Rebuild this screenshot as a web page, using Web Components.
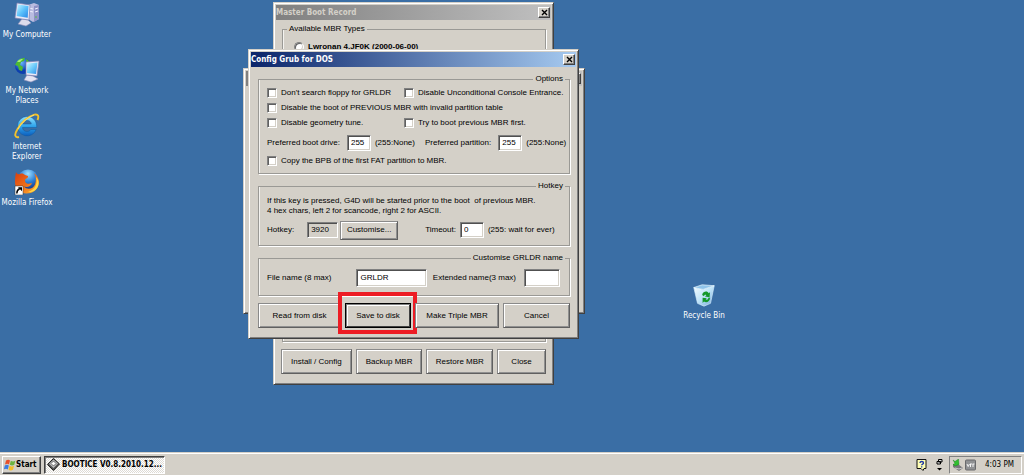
<!DOCTYPE html>
<html lang="en">
<head>
<meta charset="utf-8">
<meta name="viewport" content="width=device-width, initial-scale=1">
<title>Desktop</title>
<style>
html, body { margin: 0; height: 100%; }
body { font: 8px/10px "Liberation Sans", Arial, sans-serif; color: #000; background: #3a6ea5; overflow: hidden; }
</style>
</head>
<body>
<desktop-shell></desktop-shell>
<script>
const FACE = '#d4d0c8';
function define(name, css, html, setup) {
  const t = document.createElement('template');
  t.innerHTML = `<style>*{box-sizing:border-box}${css}</style>${html}`;
  customElements.define(name, class extends HTMLElement {
    constructor() {
      super();
      this.attachShadow({ mode: 'open' }).append(t.content.cloneNode(true));
    }
    connectedCallback() { if (setup) setup(this, this.shadowRoot); }
  });
}

const ICONS = {
  computer: `<svg viewBox="0 0 26 26"><defs><linearGradient id="s" x1="0" y1="0" x2="1" y2="1"><stop stop-color="#c4f4ff"/><stop offset=".5" stop-color="#5cc2fb"/><stop offset="1" stop-color="#2a86e6"/></linearGradient></defs>
    <path d="M14 4l6-2 5 2v14l-6 3-5-3z" fill="#b9bce0"/><path d="M20 5l5-1v14l-5 3z" fill="#8d92c6"/><path d="M15 7l4 1M15 10l4 1M21 8l3-1M21 11l3-1" stroke="#eef0ff"/><path d="M21 16h2" stroke="#58c040"/>
    <path d="M8 18l6 1 3 3-5 3-8-2z" fill="#dcdcec" stroke="#8f8fb8" stroke-width=".6"/>
    <path d="M3 2l13 2-1 15L1 17z" fill="#e8e8f6" stroke="#7c80b0" stroke-width=".7"/><path d="M4 3.500l10.500 1.600-.8 11.600L2.600 15z" fill="url(#s)"/></svg>`,
  network: `<svg viewBox="0 0 26 26"><defs><linearGradient id="s" x1="0" y1="0" x2="1" y2="1"><stop stop-color="#d0f6ff"/><stop offset=".5" stop-color="#6ccbfb"/><stop offset="1" stop-color="#2f8fe8"/></linearGradient><radialGradient id="g" cx=".4" cy=".3"><stop stop-color="#6ab4ff"/><stop offset="1" stop-color="#0d3fae"/></radialGradient></defs>
    <circle cx="9" cy="9" r="8" fill="url(#g)"/><path d="M2 6c2-4 6-5.500 9-5l-1 3-3 1-1 3 3 2-1 4-3-1-1-4-3-1zM12 2c3 1 4 3 4.500 5l-4-1z" fill="#4dbb32"/><path d="M3 5c2-3 4-3 6-3l-3 3z" fill="#a9ee7c"/>
    <path d="M13 18l6 1 5 3-7 3-7-2z" fill="#e4e4f2" stroke="#8f8fb8" stroke-width=".6"/>
    <path d="M12 5l13-1-2 15-11-1z" fill="#e9e9f7" stroke="#7c80b0" stroke-width=".7"/><path d="M13 6.500l10.500-1L22 17l-9-1z" fill="url(#s)"/></svg>`,
  explorer: `<svg viewBox="0 0 26 26"><defs><linearGradient id="e" x1="0" y1="0" x2="0" y2="1"><stop stop-color="#8fe2ff"/><stop offset=".5" stop-color="#2ea4ec"/><stop offset="1" stop-color="#0d5ebd"/></linearGradient></defs>
    <path fill-rule="evenodd" d="M13 3.500a9.700 9.700 0 1 0 9.200 13h-5.400c-1 1.600-2.300 2-3.800 2-2.500 0-4.300-1.600-4.500-4h14.200c.4-6.600-4-11-9.700-11zM8.600 11c.4-2.200 2-3.600 4.400-3.600s4 1.400 4.300 3.600z" fill="url(#e)" stroke="#135a9f" stroke-width=".5"/>
    <path d="M5 24c-4 1-5-2-2-7C7 9 15 3 20.500 1.600c4-.8 4.500 2 3 5.400" fill="none" stroke="#f3c22c" stroke-width="1.900"/><path d="M4 16c4-7 10-11.500 16-14" fill="none" stroke="#fff0a0" stroke-width=".6"/></svg>`,
  firefox: `<svg viewBox="0 0 26 26"><defs><radialGradient id="b" cx=".5" cy=".2" r=".8"><stop stop-color="#9fe0ff"/><stop offset=".5" stop-color="#2c7fd6"/><stop offset="1" stop-color="#102a7c"/></radialGradient><linearGradient id="o" x1="0" y1="0" x2="1" y2="1"><stop stop-color="#d63c10"/><stop offset=".55" stop-color="#f0721a"/><stop offset="1" stop-color="#ffc534"/></linearGradient></defs>
    <circle cx="14" cy="11" r="10.500" fill="url(#b)"/>
    <path d="M2 3c1 2 2 2.500 4 2 2-1 4 0 5 1l3 1c.500 2-2 2.500-3 3.500 0 2 0 3 2 4 2 .7 3-.5 5-.2-1 3-5 4.500-8 3.200 3 3.500 9 3 11-2 1.500-4 1-8-1-11.500C24 7 26 12 24.500 16c-1.500 5-6 8.500-12 8.500C5 24.500.5 19 1 12c.1-3 .3-6 1-9z" fill="url(#o)"/><path d="M22 8c2 7-1 13-8 15 6 .5 10-3 10.500-8 .3-3-.5-5-2.500-7z" fill="#ffd747"/>
    <path d="M1 17h8v9H1z" fill="#fff" stroke="#333" stroke-width=".5"/><path d="M2.800 24.500c0-2.500 1-4 3-5" fill="none" stroke="#000" stroke-width="1.400"/><path d="M4 18.300h4v4z"/></svg>`,
  recycle: `<svg viewBox="-1 -1 28 28"><defs><linearGradient id="r" x1="0" y1="0" x2="1" y2="1"><stop stop-color="#f4fcff"/><stop offset=".5" stop-color="#bfe4f9"/><stop offset="1" stop-color="#6fa5d6"/></linearGradient></defs>
    <path d="M2 5l10 2 12-4-4 19-7 3-7-3z" fill="url(#r)" stroke="#d7f0ff" stroke-width=".7"/><path d="M2 5l9-3 13 1-12 4z" fill="#8fc4ea" stroke="#eefaff" stroke-width=".7"/>
    <path d="M11 13c1-4.500 6-4.500 7-2l1.500-1-.5 5.500-5-1 1.500-1.200c-1-1-2-.5-2.500 1zM19.500 16c0 4.500-4.500 6-6.500 4L11.500 21.500V16l4.500.5-1.200 1.200c1 1 2.500.5 3-1.700z" fill="#14982a"/></svg>`
};

define('desk-icon', `
  :host { display: block; }
  a { display: flex; flex-direction: column; align-items: center; gap: 3px; color: #fff; text-decoration: none; text-align: center;
      font: 8px/10px "DejaVu Sans Condensed", "DejaVu Sans", sans-serif; }
  .pic, svg { display: block; width: 26px; height: 26px; }
`, `<a href="#"><span class="pic"></span><span><slot></slot></span></a>`,
  (el, root) => { root.querySelector('.pic').innerHTML = ICONS[el.getAttribute('icon')]; });

define('app-window', `
  :host { display: flex; flex-direction: column; background: ${FACE}; border: 1px solid; border-color: ${FACE} #404040 #404040 ${FACE};
    box-shadow: inset 1px 1px #fff, inset -1px -1px #808080; padding: 2px 1px 2px 2px; box-sizing: border-box; }
  header { display: flex; align-items: center; justify-content: space-between; height: 15px; margin-right: 1px; padding: 0 1px 0 0; color: #fff;
    background: linear-gradient(90deg, #0a246a, #a6caf0); }
  :host([inactive]) header { background: linear-gradient(90deg, #808080, #c0c0c0); color: ${FACE}; }
  h2 { margin: 0; font: bold 8px/14px "DejaVu Sans Condensed", "DejaVu Sans", sans-serif; white-space: nowrap; }
  button { display: grid; place-items: center; width: 12px; height: 11px; padding: 0; background: ${FACE}; border: 1px solid;
    border-color: #fff #404040 #404040 #fff; box-shadow: inset -1px -1px #808080; }
  svg { width: 7px; height: 7px; display: block; }
  .body { flex: 1; display: flex; flex-direction: column; gap: 7px; padding: 7px 7px 8px; }
`, `<header><h2></h2><button aria-label="Close window"><svg viewBox="0 0 7 7"><path d="M1 1l5 5M6 1L1 6" stroke="#000" stroke-width="1.400"/></svg></button></header><div class="body"><slot></slot></div>`,
  (el, root) => { root.querySelector('h2').textContent = el.getAttribute('heading'); });

define('group-box', `
  :host { display: block; }
  fieldset { margin: 0; min-width: 0; height: 100%; padding: 0 8px; border: 1px solid #9a9995; box-shadow: inset 1px 0 #f4f3f0, 1px 1px #fff; }
  legend { padding: 0 2px; line-height: 10px; background: ${FACE}; margin-left: -4px; }
  :host([end]) legend { margin-left: auto; margin-right: -4px; }
`, `<fieldset><legend></legend><slot></slot></fieldset>`,
  (el, root) => { root.querySelector('legend').textContent = el.getAttribute('heading'); });

define('check-box', `
  :host { display: block; }
  label { display: flex; align-items: center; gap: 4px; height: 100%; white-space: nowrap; }
  input { appearance: none; flex: none; margin: 0; width: 10px; height: 10px; background: #fff; border: 1px solid; border-color: #808080 #fff #fff #808080;
    box-shadow: inset 1px 1px #606060, inset -1px -1px ${FACE}; }
  input[type=radio] { border-radius: 50%; }
`, `<label><input type="checkbox"><span><slot></slot></span></label>`,
  (el, root) => { if (el.hasAttribute('radio')) root.querySelector('input').type = 'radio'; });

define('text-field', `
  :host { display: block; }
  label { display: flex; align-items: center; white-space: nowrap; gap: var(--gap, 7px); }
  input { width: var(--width, 24px); height: var(--height, 16px); margin: 0; padding: 0 3px 1px; font: inherit; color: #000; border: 1px solid; border-radius: 0;
    border-color: #808080 #fff #fff #808080; background: #fff; box-shadow: inset 1px 1px #505050, inset -1px -1px ${FACE}; }
  input[readonly] { background: ${FACE}; }
`, `<label><span><slot></slot></span><input type="text"></label>`,
  (el, root) => {
    const i = root.querySelector('input');
    i.value = el.getAttribute('value') || '';
    i.readOnly = el.hasAttribute('readonly');
  });

define('push-button', `
  :host { display: block; position: relative; }
  button { width: 100%; height: var(--height, 25px); padding: 0; font: inherit; color: #000; white-space: nowrap; background: ${FACE}; border: 1px solid;
    border-color: #8a8a8a #606060 #606060 #8a8a8a; box-shadow: inset 1px 1px #fff, inset -1px -1px #909090; }
  :host([default]) button { border-color: #000; box-shadow: inset 1px 1px #808080, inset -1px -1px #404040, inset 2px 2px #fff; }
  :host([marked])::after { content: ""; position: absolute; inset: -11px -6px -6px -7px; border: 4px solid #ed1c24; pointer-events: none; }
`, `<button><slot></slot></button>`);

define('task-bar', `
  :host { display: flex; align-items: center; height: 23px; padding: 1px 2px 0; background: ${FACE}; border-top: 1px solid ${FACE}; box-shadow: inset 0 1px #fff;
    font: 8px/10px "DejaVu Sans Condensed", "DejaVu Sans", sans-serif; }
  button { display: flex; align-items: center; height: 18px; margin: 0; padding: 0 2px; color: #000; font: inherit; font-weight: bold; white-space: nowrap; background: ${FACE};
    border: 1px solid; border-color: #fff #404040 #404040 #fff; box-shadow: inset -1px -1px #808080; }
  .start { width: 39px; gap: 0; padding: 0 1px; }
  .task { width: 121px; margin-left: 3px; gap: 2px; border-color: #404040 #fff #fff #404040; box-shadow: inset 1px 1px #808080;
    background: repeating-conic-gradient(#fff 0 25%, #dedbd5 0 50%) 0 0 / 2px 2px; }
  svg { display: block; flex: none; }
  .extras { display: flex; align-items: center; gap: 9px; margin-left: auto; margin-right: 6px; }
  .tray { display: flex; align-items: center; gap: 2px; width: 73px; height: 18px; padding: 0 7px 0 2px; border: 1px solid; border-color: #808080 #fff #fff #808080; }
  time { margin-left: auto; }
`, `<button class="start"><svg width="12" height="12" viewBox="0 0 12 12"><path d="M2 1.500c1.500-1 3-1 4 0L5 5.500c-1-1-2.500-1-4 0z" fill="#e8502a"/><path d="M6.800 1.800c1.500 1 3 1 4.500 0l-1 4c-1.500 1-3 1-4.500 0z" fill="#6cb33e"/><path d="M.8 6.500c1.500-1 3-1 4 0l-1 4c-1-1-2.500-1-4 0z" fill="#3b7be0"/><path d="M5.500 6.800c1.500 1 3 1 4.500 0l-1 4c-1.500 1-3 1-4.500 0z" fill="#f5bd28"/></svg>Start</button>
  <button class="task"><svg width="13" height="13" viewBox="0 0 13 13"><path d="M6.500 .5l6 5.500-6 6.500-6-6z" fill="#555" stroke="#222"/><path d="M6.500 1.500l4.500 4-4.500 4.500L2 5.800z" fill="#bbb"/><path d="M6.500 3l2.500 2.500-2.500 2.500L4 5.500z" fill="#fff" stroke="#444" stroke-width=".7"/></svg>BOOTICE V0.8.2010.12...</button>
  <div class="extras"><svg width="11" height="12" viewBox="0 0 11 12"><path d="M1 .5h9v9H8l-1 2-2-2H1z" fill="#ffffb4" stroke="#111"/><path d="M4 4c0-2 3.500-2 3.500 0 0 1.200-1.800 1-1.800 2.300M5.700 7.300v1.200" fill="none" stroke="#1a35a8" stroke-width="1.300"/></svg>
  <svg width="7" height="14" viewBox="0 0 7 14"><path d="M2.500 1.500h3.500v2.500H2.500zM1 3.500h3.500v2.500H1z" fill="#ddd" stroke="#000"/><path d="M1 10h5L3.500 12.500z"/></svg></div>
  <div class="tray"><svg width="11" height="12" viewBox="0 0 11 12"><path d="M1 5l5 0 5 4-4 3-6-4z" fill="#77777a"/><path d="M3 9l4 1 3-1" stroke="#ccc" fill="none"/><path d="M1 1l2 1.500L6.500 0 7 5.500 3 7 1 5.500l2-1z" fill="#2fc02e" stroke="#157a18" stroke-width=".4"/></svg>
  <svg width="11" height="12" viewBox="0 0 11 12"><rect x=".5" y="1" width="10" height="10" rx="1" fill="#8f9193" stroke="#68696b"/><path d="M2 5l1.200 2.500L4.500 5M5.500 8V5M5 5h2M8 8V5M7.500 5h2" stroke="#fff" stroke-width=".9" fill="none"/></svg><time>4:03 PM</time></div>`);

define('config-dialog', `
  :host { display: block; }
  app-window { width: 331px; }
  .checks { display: grid; grid-template-columns: 137px 1fr; grid-auto-rows: 15px; padding-top: 1px; }
  .wide { grid-column: 1 / -1; }
  .row { display: flex; align-items: center; height: 24px; white-space: nowrap; }
  .first { margin-top: 1px; }
  .copy { height: 12px; margin-bottom: 6px; }
  .suffix { margin-left: 4px; }
  .partition { margin-left: 10px; }
  p { margin: 5px 0 2px; white-space: pre; }
  .hot { padding-bottom: 3px; height: 27px; }
  .key { --gap: 13px; --width: 31px; }
  .customise { width: 58px; margin-left: 2px; --height: 19px; }
  .timeout { --gap: 4px; margin-left: 27px; }
  .names { height: 32px; --height: 18px; padding-bottom: 2px; justify-content: space-between; }
  .grldr { --gap: 25px; --width: 71px; }
  .ext { --gap: 8px; --width: 36px; margin-right: 1px; }
  .actions { display: grid; grid-template-columns: 83fr 66fr 84fr 67fr; gap: 4px; }
`, `<app-window heading="Config Grub for DOS">
    <group-box heading="Options" end>
      <div class="checks">
        <check-box>Don't search floppy for GRLDR</check-box><check-box>Disable Unconditional Console Entrance.</check-box>
        <check-box class="wide">Disable the boot of PREVIOUS MBR with invalid partition table</check-box>
        <check-box>Disable geometry tune.</check-box><check-box>Try to boot previous MBR first.</check-box>
      </div>
      <div class="row first"><text-field value="255">Preferred boot drive:</text-field><span class="suffix">(255:None)</span>
        <text-field class="partition" value="255">Preferred partition:</text-field><span class="suffix">(255:None)</span></div>
      <check-box class="copy">Copy the BPB of the first FAT partition to MBR.</check-box>
    </group-box>
    <group-box heading="Hotkey" end>
      <p>If this key is pressed, G4D will be started prior to the boot  of previous MBR.
4 hex chars, left 2 for scancode, right 2 for ASCII.</p>
      <div class="row hot"><text-field class="key" value="3920" readonly>Hotkey:</text-field><push-button class="customise">Customise...</push-button>
        <text-field class="timeout" value="0">Timeout:</text-field><span class="suffix">(255: wait for ever)</span></div>
    </group-box>
    <group-box heading="Customise GRLDR name" end>
      <div class="row names"><text-field class="grldr" value="GRLDR">File name (8 max)</text-field><text-field class="ext">Extended name(3 max)</text-field></div>
    </group-box>
    <div class="actions"><push-button>Read from disk</push-button><push-button default marked>Save to disk</push-button><push-button>Make Triple MBR</push-button><push-button>Cancel</push-button></div>
  </app-window>`);

define('record-window', `
  :host { display: block; }
  app-window { width: 281px; height: 383px; }
  group-box { flex: 1; margin: -3px -1px 0; }
  check-box { margin: 8px 0 0 3px; font-weight: bold; }
  .actions { display: grid; grid-template-columns: 71fr 67fr 67fr 49fr; gap: 4px; margin: 0 -1px 0 -2px; }
`, `<app-window heading="Master Boot Record" inactive>
    <group-box heading="Available MBR Types"><check-box radio>Lwronan 4.JF0K (2000-06-00)</check-box></group-box>
    <div class="actions"><push-button>Install / Config</push-button><push-button>Backup MBR</push-button><push-button>Restore MBR</push-button><push-button>Close</push-button></div>
  </app-window>`);

define('desktop-shell', `
  :host { display: flex; flex-direction: column; height: 100vh; background: #3a6ea5; }
  main { flex: 1; position: relative; }
  nav { display: grid; grid-auto-rows: 56px; width: 54px; padding-top: 1px; }
  .bin { position: absolute; left: 680px; top: 282px; width: 48px; }
  .back, record-window, config-dialog { position: absolute; }
  .back { left: 243px; top: 68px; width: 342px; height: 246px; }
  record-window { left: 273px; top: 2px; }
  config-dialog { left: 248px; top: 49px; }
`, `<main>
    <nav aria-label="Desktop"><desk-icon icon="computer">My Computer</desk-icon><desk-icon icon="network">My Network<br>Places</desk-icon><desk-icon icon="explorer">Internet<br>Explorer</desk-icon><desk-icon icon="firefox">Mozilla Firefox</desk-icon></nav>
    <desk-icon class="bin" icon="recycle">Recycle Bin</desk-icon>
    <app-window class="back" heading="" inactive></app-window>
    <record-window></record-window>
    <config-dialog></config-dialog>
  </main><task-bar></task-bar>`);
</script>
</body>
</html>
